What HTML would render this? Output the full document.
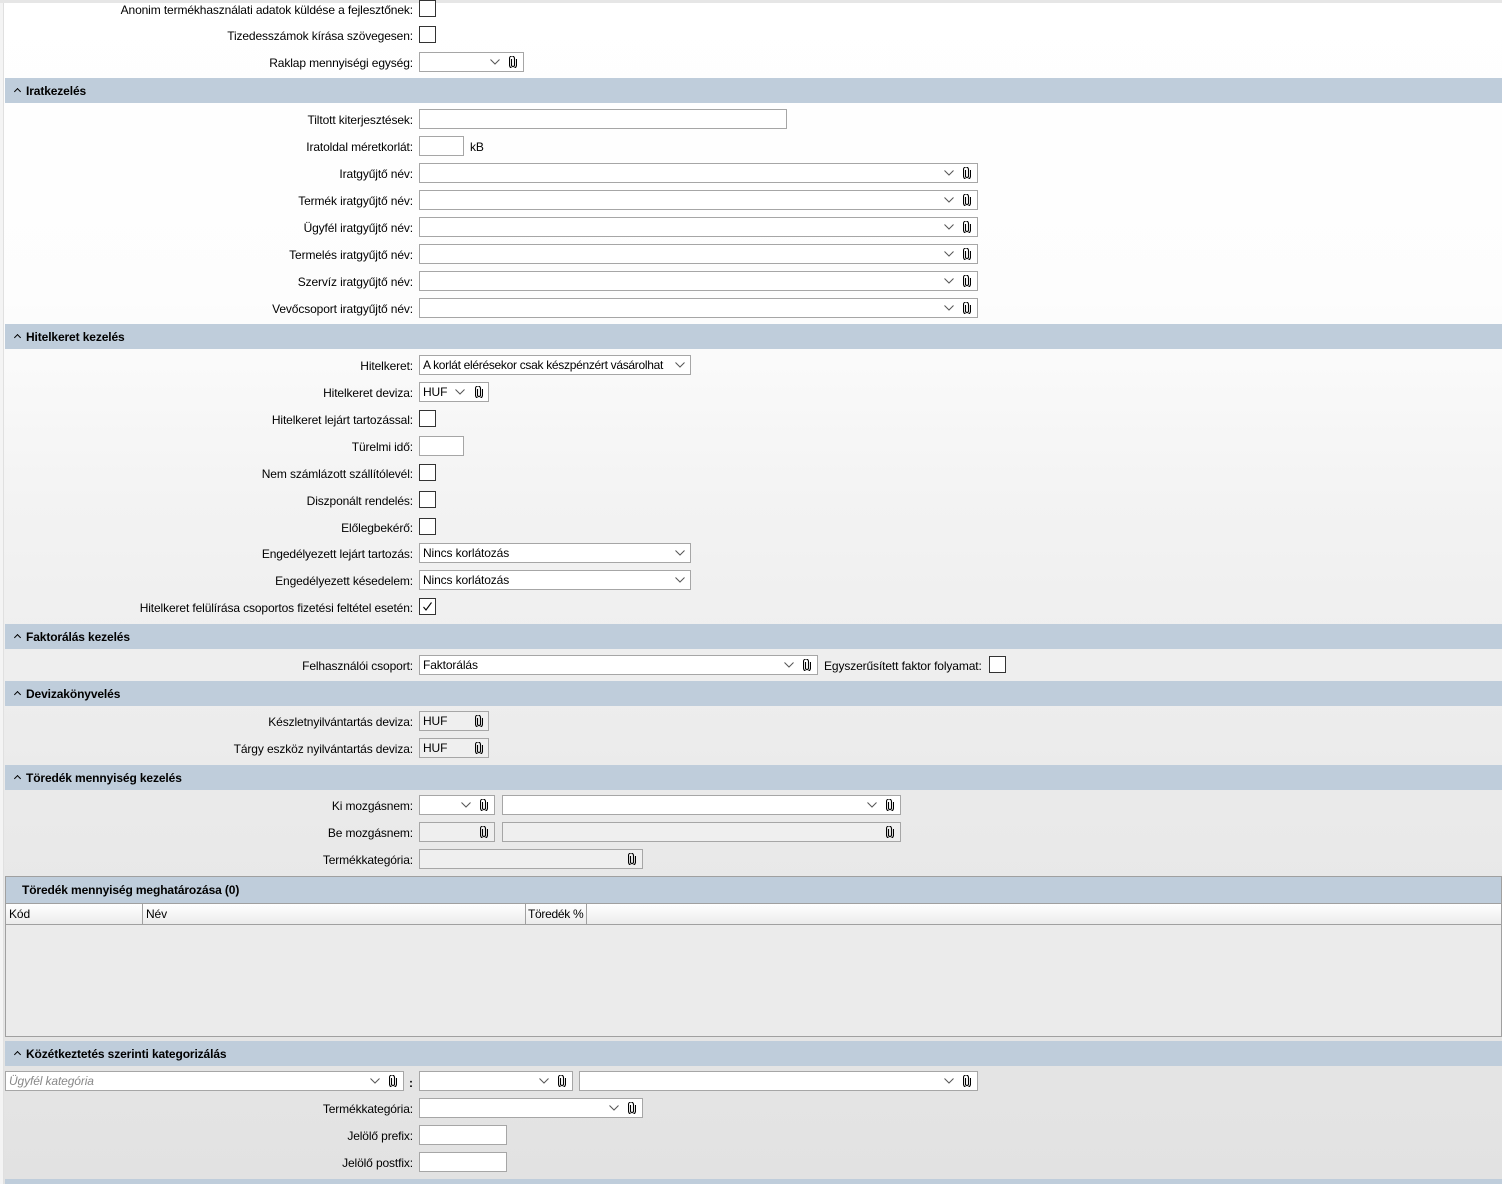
<!DOCTYPE html>
<html><head><meta charset="utf-8">
<style>
*{margin:0;padding:0;box-sizing:border-box}
body{width:1502px;height:1184px;overflow:hidden;position:relative;font-family:"Liberation Sans",sans-serif;font-size:12px;letter-spacing:-0.12px;color:#000;
background:linear-gradient(#fff 0px,#fdfdfd 300px,#f3f3f3 500px,#eaeaea 800px,#e2e2e2 1184px)}
.top{position:absolute;left:0;top:0;width:1502px;height:3px;background:#e6e6e6}
.lb{position:absolute;left:0;top:3px;width:4px;height:1181px;background:#f4f4f4;border-right:1px solid #e0e0e0}
.h{position:absolute;left:5px;width:1497px;height:25px;background:#bfcddb;font-weight:bold;line-height:26px;padding-left:10px}
.h:before{content:"";display:inline-block;width:4px;height:4px;border-left:1.6px solid #000;border-top:1.6px solid #000;transform:rotate(45deg);margin-right:6px;position:relative;top:-1px}
.l{position:absolute;right:1089px;line-height:18px;white-space:nowrap}
.b{position:absolute;height:20px;border:1px solid #a6a6a6;background:#fff;line-height:18px;padding-left:3px;white-space:nowrap;overflow:hidden}
.d{background:#efefef}
.c{position:absolute;left:419px;width:17px;height:17px;border:1px solid #333;background:#fff}
.ch{position:absolute;top:6px}
.cl{position:absolute;top:3px}
</style></head><body>
<div class="top"></div><div class="lb"></div>
<svg width="0" height="0" style="position:absolute"><defs>
<symbol id="v" viewBox="0 0 10 6"><polyline points="0.5,0.5 5,5 9.5,0.5" fill="none" stroke="#555" stroke-width="1"/></symbol>
<symbol id="p" viewBox="0 0 8 12"><path d="M2.5 3v6a1.5 1.5 0 0 0 3 0V2.5a2.5 2.5 0 0 0-5 0V9a3.5 3.5 0 0 0 7 0V3" fill="none" stroke="#000" stroke-width="1.1"/></symbol>
</defs></svg>

<div class="l" style="top:1px">Anonim termékhasználati adatok küldése a fejlesztőnek:</div><div class="c" style="top:0px"></div>
<div class="l" style="top:27px">Tizedesszámok kírása szövegesen:</div><div class="c" style="top:26px"></div>
<div class="l" style="top:54px">Raklap mennyiségi egység:</div>
<div class="b" style="top:52px;left:419px;width:105px"><svg class="ch" style="left:70px" width="10" height="6"><use href="#v"/></svg><svg class="cl" style="left:89px" width="8" height="12"><use href="#p"/></svg></div>

<div class="h" style="top:78px">Iratkezelés</div>
<div class="l" style="top:111px">Tiltott kiterjesztések:</div><div class="b" style="top:109px;left:419px;width:368px"></div>
<div class="l" style="top:138px">Iratoldal méretkorlát:</div><div class="b" style="top:136px;left:419px;width:45px"></div><div class="l" style="top:138px;left:470px;right:auto">kB</div>

<div class="l" style="top:165px">Iratgyűjtő név:</div>
<div class="l" style="top:192px">Termék iratgyűjtő név:</div>
<div class="l" style="top:219px">Ügyfél iratgyűjtő név:</div>
<div class="l" style="top:246px">Termelés iratgyűjtő név:</div>
<div class="l" style="top:273px">Szervíz iratgyűjtő név:</div>
<div class="l" style="top:300px">Vevőcsoport iratgyűjtő név:</div>
<div class="b" style="top:163px;left:419px;width:559px"><svg class="ch" style="left:524px" width="10" height="6"><use href="#v"/></svg><svg class="cl" style="left:543px" width="8" height="12"><use href="#p"/></svg></div>
<div class="b" style="top:190px;left:419px;width:559px"><svg class="ch" style="left:524px" width="10" height="6"><use href="#v"/></svg><svg class="cl" style="left:543px" width="8" height="12"><use href="#p"/></svg></div>
<div class="b" style="top:217px;left:419px;width:559px"><svg class="ch" style="left:524px" width="10" height="6"><use href="#v"/></svg><svg class="cl" style="left:543px" width="8" height="12"><use href="#p"/></svg></div>
<div class="b" style="top:244px;left:419px;width:559px"><svg class="ch" style="left:524px" width="10" height="6"><use href="#v"/></svg><svg class="cl" style="left:543px" width="8" height="12"><use href="#p"/></svg></div>
<div class="b" style="top:271px;left:419px;width:559px"><svg class="ch" style="left:524px" width="10" height="6"><use href="#v"/></svg><svg class="cl" style="left:543px" width="8" height="12"><use href="#p"/></svg></div>
<div class="b" style="top:298px;left:419px;width:559px"><svg class="ch" style="left:524px" width="10" height="6"><use href="#v"/></svg><svg class="cl" style="left:543px" width="8" height="12"><use href="#p"/></svg></div>

<div class="h" style="top:324px">Hitelkeret kezelés</div>
<div class="l" style="top:357px">Hitelkeret:</div>
<div class="b" style="top:355px;left:419px;width:272px;letter-spacing:-0.3px">A korlát elérésekor csak készpénzért vásárolhat<svg class="ch" style="left:255px;background:#fff" width="10" height="6"><use href="#v"/></svg></div>
<div class="l" style="top:384px">Hitelkeret deviza:</div>
<div class="b" style="top:382px;left:419px;width:70px">HUF<svg class="ch" style="left:35px" width="10" height="6"><use href="#v"/></svg><svg class="cl" style="left:55px" width="8" height="12"><use href="#p"/></svg></div>
<div class="l" style="top:411px">Hitelkeret lejárt tartozással:</div><div class="c" style="top:410px"></div>
<div class="l" style="top:438px">Türelmi idő:</div><div class="b" style="top:436px;left:419px;width:45px"></div>
<div class="l" style="top:465px">Nem számlázott szállítólevél:</div><div class="c" style="top:464px"></div>
<div class="l" style="top:492px">Diszponált rendelés:</div><div class="c" style="top:491px"></div>
<div class="l" style="top:519px">Előlegbekérő:</div><div class="c" style="top:518px"></div>
<div class="l" style="top:545px">Engedélyezett lejárt tartozás:</div>
<div class="b" style="top:543px;left:419px;width:272px">Nincs korlátozás<svg class="ch" style="left:255px" width="10" height="6"><use href="#v"/></svg></div>
<div class="l" style="top:572px">Engedélyezett késedelem:</div>
<div class="b" style="top:570px;left:419px;width:272px">Nincs korlátozás<svg class="ch" style="left:255px" width="10" height="6"><use href="#v"/></svg></div>
<div class="l" style="top:599px">Hitelkeret felülírása csoportos fizetési feltétel esetén:</div>
<div class="c" style="top:598px"><svg width="15" height="15" style="position:absolute;left:0;top:0"><polyline points="3.5,8 6,11 11.5,3.5" fill="none" stroke="#000" stroke-width="1.1"/></svg></div>

<div class="h" style="top:624px">Faktorálás kezelés</div>
<div class="l" style="top:657px">Felhasználói csoport:</div>
<div class="b" style="top:655px;left:419px;width:399px">Faktorálás<svg class="ch" style="left:364px" width="10" height="6"><use href="#v"/></svg><svg class="cl" style="left:383px" width="8" height="12"><use href="#p"/></svg></div>
<div class="l" style="top:657px;left:824px;right:auto">Egyszerűsített faktor folyamat:</div><div class="c" style="top:656px;left:989px"></div>

<div class="h" style="top:681px">Devizakönyvelés</div>
<div class="l" style="top:713px">Készletnyilvántartás deviza:</div>
<div class="b d" style="top:711px;left:419px;width:70px">HUF<svg class="cl" style="left:55px" width="8" height="12"><use href="#p"/></svg></div>
<div class="l" style="top:740px">Tárgy eszköz nyilvántartás deviza:</div>
<div class="b d" style="top:738px;left:419px;width:70px">HUF<svg class="cl" style="left:55px" width="8" height="12"><use href="#p"/></svg></div>

<div class="h" style="top:765px">Töredék mennyiség kezelés</div>
<div class="l" style="top:797px">Ki mozgásnem:</div>
<div class="b" style="top:795px;left:419px;width:76px"><svg class="ch" style="left:41px" width="10" height="6"><use href="#v"/></svg><svg class="cl" style="left:60px" width="8" height="12"><use href="#p"/></svg></div>
<div class="b" style="top:795px;left:502px;width:399px"><svg class="ch" style="left:364px" width="10" height="6"><use href="#v"/></svg><svg class="cl" style="left:383px" width="8" height="12"><use href="#p"/></svg></div>
<div class="l" style="top:824px">Be mozgásnem:</div>
<div class="b d" style="top:822px;left:419px;width:76px"><svg class="cl" style="left:60px" width="8" height="12"><use href="#p"/></svg></div>
<div class="b d" style="top:822px;left:502px;width:399px"><svg class="cl" style="left:383px" width="8" height="12"><use href="#p"/></svg></div>
<div class="l" style="top:851px">Termékkategória:</div>
<div class="b d" style="top:849px;left:419px;width:224px"><svg class="cl" style="left:208px" width="8" height="12"><use href="#p"/></svg></div>

<div style="position:absolute;left:5px;top:876px;width:1497px;height:161px;border:1px solid #a0a0a0;background:#ebebeb">
 <div style="height:26px;background:#bfcddb;font-weight:bold;line-height:27px;padding-left:16px">Töredék mennyiség meghatározása (0)</div>
 <div style="height:22px;background:linear-gradient(#fff,#ececec);border-top:1px solid #a0a0a0;border-bottom:1px solid #a0a0a0;position:relative;line-height:21px;white-space:nowrap">
  <span style="position:absolute;left:3px">Kód</span>
  <span style="position:absolute;left:136px;top:0;height:20px;border-left:1px solid #a0a0a0;padding-left:3px">Név</span>
  <span style="position:absolute;left:519px;top:0;height:20px;border-left:1px solid #a0a0a0;border-right:1px solid #a0a0a0;padding:0 2px;width:62px;white-space:nowrap;letter-spacing:-0.3px">Töredék %</span>
 </div>
</div>

<div class="h" style="top:1041px">Közétkeztetés szerinti kategorizálás</div>
<div class="b" style="top:1071px;left:5px;width:399px;color:#888;font-style:italic">Ügyfél kategória<svg class="ch" style="left:364px" width="10" height="6"><use href="#v"/></svg><svg class="cl" style="left:383px" width="8" height="12"><use href="#p"/></svg></div>
<div class="l" style="top:1074px;left:409px;right:auto;font-weight:bold">:</div>
<div class="b" style="top:1071px;left:419px;width:154px"><svg class="ch" style="left:119px" width="10" height="6"><use href="#v"/></svg><svg class="cl" style="left:138px" width="8" height="12"><use href="#p"/></svg></div>
<div class="b" style="top:1071px;left:579px;width:399px"><svg class="ch" style="left:364px" width="10" height="6"><use href="#v"/></svg><svg class="cl" style="left:383px" width="8" height="12"><use href="#p"/></svg></div>
<div class="l" style="top:1100px">Termékkategória:</div>
<div class="b" style="top:1098px;left:419px;width:224px"><svg class="ch" style="left:189px" width="10" height="6"><use href="#v"/></svg><svg class="cl" style="left:208px" width="8" height="12"><use href="#p"/></svg></div>
<div class="l" style="top:1127px">Jelölő prefix:</div><div class="b" style="top:1125px;left:419px;width:88px"></div>
<div class="l" style="top:1154px">Jelölő postfix:</div><div class="b" style="top:1152px;left:419px;width:88px"></div>
<div style="position:absolute;left:5px;top:1179px;width:1497px;height:5px;background:#bfcddb"></div>
</body></html>
